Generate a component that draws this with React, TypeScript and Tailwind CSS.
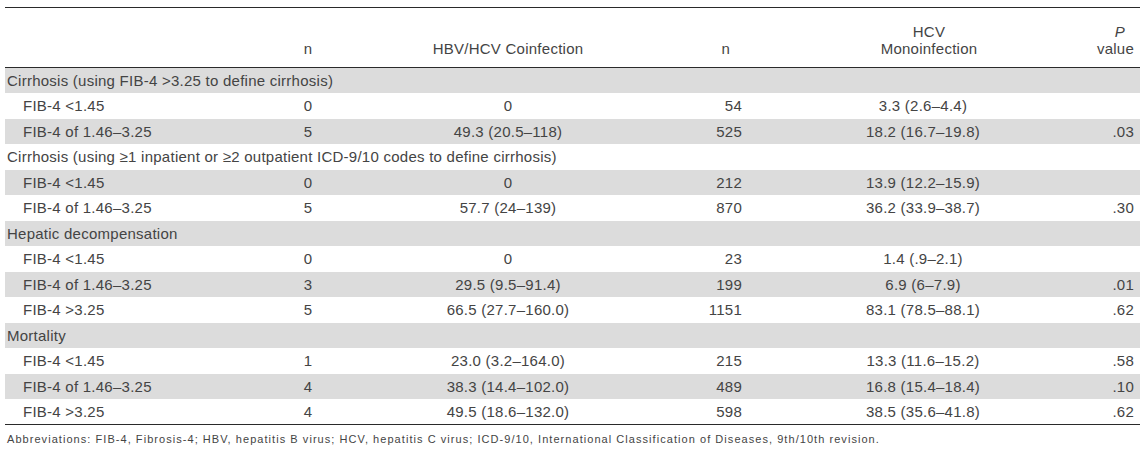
import React from "react";

type Row =
  | { kind: "group"; label: string }
  | { kind: "data"; label: string; n1: string; co: string; n2: string; mono: string; p: string };

const rows: Row[] = [
  { kind: "group", label: "Cirrhosis (using FIB-4 >3.25 to define cirrhosis)" },
  { kind: "data", label: "FIB-4 <1.45", n1: "0", co: "0", n2: "54", mono: "3.3 (2.6–4.4)", p: "" },
  { kind: "data", label: "FIB-4 of 1.46–3.25", n1: "5", co: "49.3 (20.5–118)", n2: "525", mono: "18.2 (16.7–19.8)", p: ".03" },
  { kind: "group", label: "Cirrhosis (using ≥1 inpatient or ≥2 outpatient ICD-9/10 codes to define cirrhosis)" },
  { kind: "data", label: "FIB-4 <1.45", n1: "0", co: "0", n2: "212", mono: "13.9 (12.2–15.9)", p: "" },
  { kind: "data", label: "FIB-4 of 1.46–3.25", n1: "5", co: "57.7 (24–139)", n2: "870", mono: "36.2 (33.9–38.7)", p: ".30" },
  { kind: "group", label: "Hepatic decompensation" },
  { kind: "data", label: "FIB-4 <1.45", n1: "0", co: "0", n2: "23", mono: "1.4 (.9–2.1)", p: "" },
  { kind: "data", label: "FIB-4 of 1.46–3.25", n1: "3", co: "29.5 (9.5–91.4)", n2: "199", mono: "6.9 (6–7.9)", p: ".01" },
  { kind: "data", label: "FIB-4 >3.25", n1: "5", co: "66.5 (27.7–160.0)", n2: "1151", mono: "83.1 (78.5–88.1)", p: ".62" },
  { kind: "group", label: "Mortality" },
  { kind: "data", label: "FIB-4 <1.45", n1: "1", co: "23.0 (3.2–164.0)", n2: "215", mono: "13.3 (11.6–15.2)", p: ".58" },
  { kind: "data", label: "FIB-4 of 1.46–3.25", n1: "4", co: "38.3 (14.4–102.0)", n2: "489", mono: "16.8 (15.4–18.4)", p: ".10" },
  { kind: "data", label: "FIB-4 >3.25", n1: "4", co: "49.5 (18.6–132.0)", n2: "598", mono: "38.5 (35.6–41.8)", p: ".62" },
];

const App = () => {
  return (
    <div className="min-h-[463px] bg-white px-[5px] pt-[7px] font-['Liberation_Sans',Arial,sans-serif] text-[#444]">
      <table className="w-[1135px] table-fixed border-collapse text-[15px] leading-[17px] tracking-[0.25px]">
        <colgroup>
          <col className="w-[273px]" />
          <col className="w-[60px]" />
          <col className="w-[340px]" />
          <col className="w-[72px]" />
          <col className="w-[346px]" />
          <col className="w-[44px]" />
        </colgroup>
        <thead>
          <tr className="h-[60px] border-y border-[#2a2a2a] align-bottom">
            <th className="pb-[10px]" />
            <th className="pb-[10px] text-center font-normal">n</th>
            <th className="pb-[10px] text-center font-normal">HBV/HCV Coinfection</th>
            <th className="pb-[10px] pr-[20px] text-right font-normal">n</th>
            <th className="pb-[10px] pl-[12px] text-center font-normal">
              HCV
              <br />
              Monoinfection
            </th>
            <th className="pb-[10px] pr-[6px] text-right font-normal">
              <span className="mr-[9px] italic">P</span>
              <br />
              value
            </th>
          </tr>
        </thead>
        <tbody className="border-b border-[#2a2a2a]">
          {rows.map((row, i) => (
            <tr key={i} className={`h-[25.5px] ${i % 2 === 0 ? "bg-[#dcdcdc]" : "bg-white"}`}>
              {row.kind === "group" ? (
                <td colSpan={6} className="whitespace-nowrap pl-[2px] align-middle">
                  {row.label}
                </td>
              ) : (
                <>
                  <td className="pl-[18px] align-middle">{row.label}</td>
                  <td className="text-center align-middle">{row.n1}</td>
                  <td className="text-center align-middle">{row.co}</td>
                  <td className="pr-[8px] text-right align-middle">{row.n2}</td>
                  <td className="text-center align-middle">{row.mono}</td>
                  <td className="pr-[6px] text-right align-middle">{row.p}</td>
                </>
              )}
            </tr>
          ))}
        </tbody>
      </table>
      <p className="mt-[8px] pl-[2px] text-[11px] leading-[13px] tracking-[1.05px]">
        Abbreviations: FIB-4, Fibrosis-4; HBV, hepatitis B virus; HCV, hepatitis C virus; ICD-9/10, International
        Classification of Diseases, 9th/10th revision.
      </p>
    </div>
  );
};

export default App;
